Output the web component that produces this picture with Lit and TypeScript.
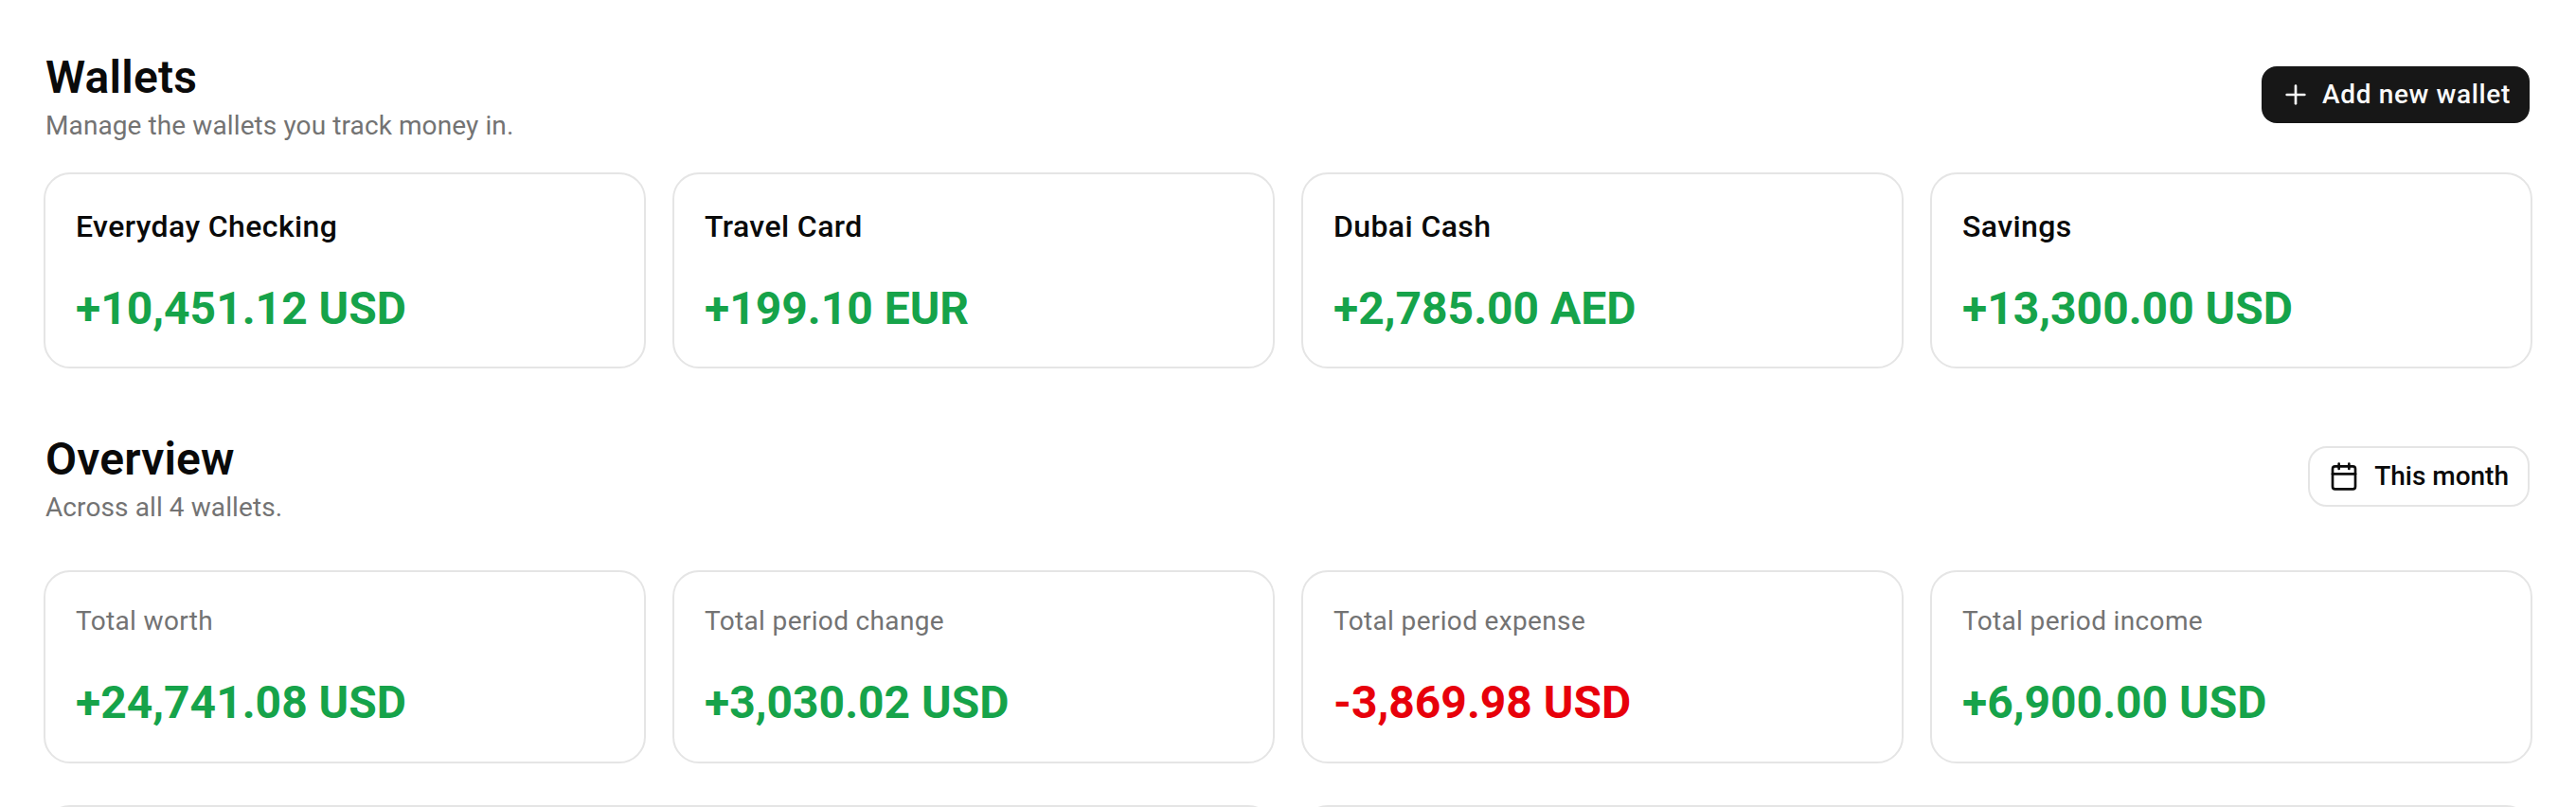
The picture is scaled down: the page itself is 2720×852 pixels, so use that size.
import { LitElement, html, css } from "lit";
import { customElement } from "lit/decorators.js";

const wallets = [
  ["Everyday Checking", "+10,451.12 USD"],
  ["Travel Card", "+199.10 EUR"],
  ["Dubai Cash", "+2,785.00 AED"],
  ["Savings", "+13,300.00 USD"],
];
const overview = [
  ["Total worth", "+24,741.08 USD", false],
  ["Total period change", "+3,030.02 USD", false],
  ["Total period expense", "-3,869.98 USD", true],
  ["Total period income", "+6,900.00 USD", false],
];

@customElement("app-root")
export class AppRoot extends LitElement {
  static styles = css`
    :host {
      display: block;
      height: 852px;
      overflow: hidden;
      background: #fff;
      padding: 54px 46px 0;
      box-sizing: border-box;
      font-family: Roboto, "Liberation Sans", sans-serif;
      color: #0a0a0a;
    }
    .head {
      display: flex;
      align-items: center;
      justify-content: space-between;
      padding: 0 3px 0 2px;
    }
    h2 { margin: 0; font-size: 48px; line-height: 56px; font-weight: 600; letter-spacing: 0.2px; }
    .sub { margin: 3px 0 0; font-size: 28px; line-height: 40px; color: #737373; letter-spacing: 0.1px; }
    .grid { display: grid; grid-template-columns: repeat(4, 1fr); gap: 28px; }
    .w-grid { margin-top: 29px; }
    .o-head { margin-top: 68px; }
    .o-grid { margin-top: 46px; }
    .card {
      border: 2px solid #e5e5e5;
      border-radius: 28px;
      padding: 34px 32px;
      display: flex;
      flex-direction: column;
      gap: 40px;
    }
    .w-grid .card { padding-bottom: 33px; gap: 38px; }
    .name { font-size: 32px; line-height: 42px; font-weight: 500; letter-spacing: 0.4px; }
    .label { font-size: 28px; line-height: 36px; font-weight: 400; color: #737373; letter-spacing: 0.35px; }
    .val { font-size: 48px; line-height: 56px; font-weight: 700; color: #16a34a; }
    .val.neg { color: #e7000b; }
    .btn {
      display: flex;
      align-items: center;
      box-sizing: border-box;
      font-size: 28px;
      line-height: 36px;
      font-weight: 500;
      padding: 12px 20px;
      border-radius: 16px;
      margin-bottom: 7px;
    }
    .btn svg { width: 32px; height: 32px; fill: none; stroke: currentColor; stroke-width: 2; stroke-linecap: round; stroke-linejoin: round; }
    .dark { background: #171717; color: #fafafa; gap: 12px; letter-spacing: 0.65px; }
    .light { border: 2px solid #e5e5e5; border-radius: 20px; color: #0a0a0a; gap: 16px; }
    .bottom { display: grid; grid-template-columns: 1fr 1fr; gap: 28px; margin-top: 44px; }
    .panel { height: 100px; border: 2px solid #e5e5e5; border-radius: 28px; }
  `;

  render() {
    return html`
      <div class="head">
        <div>
          <h2>Wallets</h2>
          <p class="sub">Manage the wallets you track money in.</p>
        </div>
        <div class="btn dark">
          <svg viewBox="0 0 24 24"><path d="M5 12h14" /><path d="M12 5v14" /></svg>
          Add new wallet
        </div>
      </div>
      <div class="grid w-grid">
        ${wallets.map(
          ([n, v]) => html`<div class="card"><div class="name">${n}</div><div class="val">${v}</div></div>`
        )}
      </div>
      <div class="head o-head">
        <div>
          <h2>Overview</h2>
          <p class="sub">Across all 4 wallets.</p>
        </div>
        <div class="btn light">
          <svg viewBox="0 0 24 24">
            <path d="M8 2v4" /><path d="M16 2v4" />
            <rect x="3" y="4" width="18" height="18" rx="2" /><path d="M3 10h18" />
          </svg>
          This month
        </div>
      </div>
      <div class="grid o-grid">
        ${overview.map(
          ([n, v, neg]) =>
            html`<div class="card"><div class="label">${n}</div><div class="val ${neg ? "neg" : ""}">${v}</div></div>`
        )}
      </div>
      <div class="bottom"><div class="panel"></div><div class="panel"></div></div>
    `;
  }
}
